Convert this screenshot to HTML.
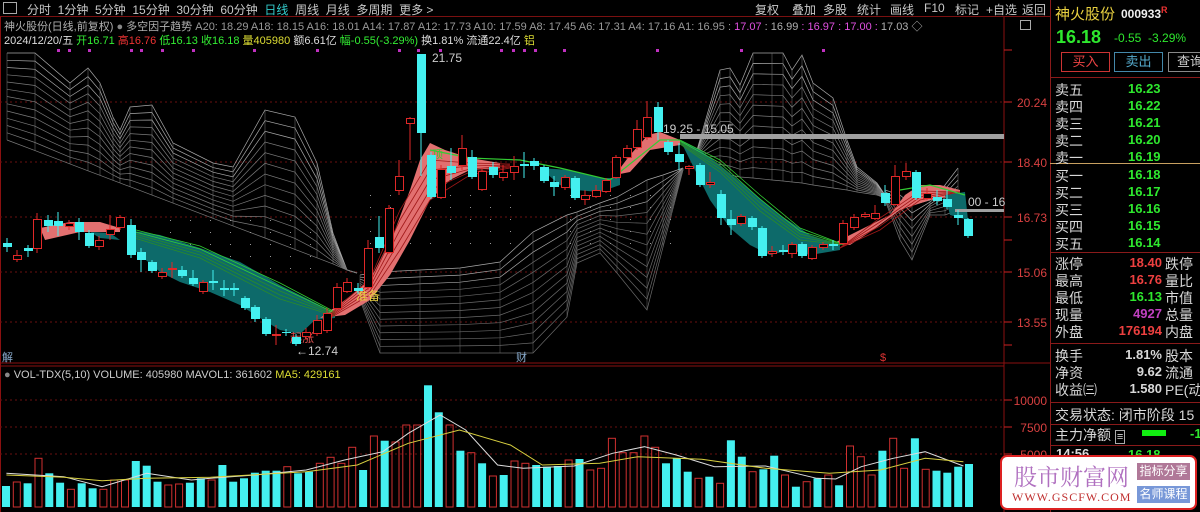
<!DOCTYPE html>
<html><head><meta charset="utf-8">
<style>
*{margin:0;padding:0;box-sizing:border-box}
body{width:1200px;height:512px;background:#000;overflow:hidden;position:relative;font-family:"Liberation Sans","Noto Sans CJK SC",sans-serif;color:#c8c8c8}
.a{position:absolute;white-space:nowrap}
#tb{position:absolute;left:0;top:0;width:1050px;height:17px;border-bottom:1px solid #7a1010;font-size:12px}
.rp{position:absolute;left:1050px;top:0;width:150px;height:512px;border-left:1px solid #8a1a1a}
.cn{font-size:14px;color:#d8d8d8}
.g{color:#2ee82e;font-weight:bold;font-size:13px}
.r{color:#ee4040;font-weight:bold;font-size:13px}
.w{color:#d8d8d8;font-weight:bold;font-size:13px}
.hl{position:absolute;left:1050px;width:150px;height:1px;background:#8a1a1a}
</style></head><body>
<svg id="s" class="a" style="left:0;top:0" width="1050" height="512" xmlns="http://www.w3.org/2000/svg"></svg>

<div id="tb">
 <div class="a" style="left:3px;top:2px;width:14px;height:12px;border:1px solid #aaa"></div>
 <div class="a" style="left:27px;top:1px;color:#c8c8c8">分时&nbsp;&nbsp;1分钟&nbsp;&nbsp;5分钟&nbsp;&nbsp;15分钟&nbsp;&nbsp;30分钟&nbsp;&nbsp;60分钟&nbsp;&nbsp;<span style="color:#3cc">日线</span>&nbsp;&nbsp;周线&nbsp;&nbsp;月线&nbsp;&nbsp;多周期&nbsp;&nbsp;更多 &gt;</div>
 <div class="a" style="left:755px;top:1px">复权</div>
 <div class="a" style="left:792px;top:1px">叠加</div>
 <div class="a" style="left:823px;top:1px">多股</div>
 <div class="a" style="left:857px;top:1px">统计</div>
 <div class="a" style="left:890px;top:1px">画线</div>
 <div class="a" style="left:924px;top:1px">F10</div>
 <div class="a" style="left:955px;top:1px">标记</div>
 <div class="a" style="left:986px;top:1px">+自选</div>
 <div class="a" style="left:1022px;top:1px">返回</div>
</div>
<div class="a" style="left:4px;top:18px;font-size:11px;color:#b0b0b0">神火股份(日线,前复权) <span style="color:#888">●</span> 多空因子趋势 <span style="color:#999">A20: 18.29 A18: 18.15 A16: 18.01 A14: 17.87 A12: 17.73 A10: 17.59 A8: 17.45 A6: 17.31 A4: 17.16 A1: 16.95 : </span><span style="color:#e050e0">17.07</span> : 16.99 <span style="color:#e050e0">: 16.97 : 17.00 :</span> 17.03 ◇</div>
<div class="a" style="left:1020px;top:20px;width:11px;height:10px;border:1px solid #aaa"></div>
<div class="a" style="left:4px;top:32px;font-size:11px;color:#ddd">2024/12/20/五 <span style="color:#3e3">开16.71</span> <span style="color:#e33">高16.76</span> <span style="color:#3e3">低16.13</span> <span style="color:#3e3">收16.18</span> <span style="color:#dd3">量405980</span> 额6.61亿 <span style="color:#3e3">幅-0.55(-3.29%)</span> 换1.81% 流通22.4亿 <span style="color:#dd3">铝</span></div>
<div class="a" style="left:4px;top:369px;font-size:11px;color:#ccc"><span style="color:#888">●</span> VOL-TDX(5,10) VOLUME: 405980 MAVOL1: 361602 <span style="color:#dd3">MA5: 429161</span></div>

<div class="rp">
 <div class="a" style="left:4px;top:3px;font-size:15px;color:#e8d040">神火股份</div>
 <div class="a" style="left:70px;top:5px;font-size:12px;color:#eee;font-weight:bold">000933<sup style="color:#e33;font-size:9px">R</sup></div>
 <div class="a" style="left:5px;top:27px;font-size:18px;color:#2ee82e;font-weight:bold">16.18</div>
 <div class="a" style="left:63px;top:31px;font-size:12px;color:#2ee82e">-0.55&nbsp;&nbsp;-3.29%</div>
 <div class="a" style="left:10px;top:52px;width:49px;height:20px;border:1px solid #c33;color:#e44;font-size:13px;text-align:center;line-height:18px">买入</div>
 <div class="a" style="left:63px;top:52px;width:49px;height:20px;border:1px solid #48a;color:#5ac;font-size:13px;text-align:center;line-height:18px">卖出</div>
 <div class="a" style="left:117px;top:52px;width:40px;height:20px;border:1px solid #888;color:#ccc;font-size:13px;line-height:18px;padding-left:8px">查询</div>
</div>
<div class="hl" style="top:77px"></div>
<div class="a" style="left:1050px;top:163px;width:150px;height:1px;background:#c8a060"></div>
<div class="hl" style="top:252px"></div>
<div class="hl" style="top:343px"></div>
<div class="hl" style="top:402px"></div>
<div class="hl" style="top:424px"></div>
<div class="hl" style="top:445px"></div>
<div id="rows"></div>
<div class="a" style="left:1056px;top:446px;font-size:13px;color:#ddd;font-weight:bold">14:56</div>
<div class="a" style="left:1128px;top:446px" ><span class="g">16.18</span></div>
<div class="a" style="left:1000px;top:455px;width:197px;height:55px;background:#fff;border:2px solid #d22;border-radius:7px">
 <div class="a" style="left:12px;top:2px;font-size:23px;color:#b070c0;font-family:'Noto Serif CJK SC',serif">股市财富网</div>
 <div class="a" style="left:10px;top:33px;font-size:12px;color:#c03030;font-family:'Liberation Serif',serif;letter-spacing:1px">WWW.GSCFW.COM</div>
 <div class="a" style="left:135px;top:6px;width:53px;height:17px;background:#b07898;color:#fff;font-size:12px;text-align:center;line-height:17px">指标分享</div>
 <div class="a" style="left:135px;top:29px;width:53px;height:17px;background:#7898d8;color:#fff;font-size:12px;text-align:center;line-height:17px">名师课程</div>
</div>

<script>
var S=document.getElementById('s'),h='';
function L(x1,y1,x2,y2,c,w,d){h+='<line x1="'+x1+'" y1="'+y1+'" x2="'+x2+'" y2="'+y2+'" stroke="'+c+'" stroke-width="'+(w||1)+'"'+(d?' stroke-dasharray="'+d+'"':'')+'/>';}
function P(pts,c,w,fill){h+='<polyline points="'+pts.map(function(p){return p.join(',')}).join(' ')+'" fill="'+(fill||'none')+'" stroke="'+c+'" stroke-width="'+(w||1)+'"/>';}
function G(pts,fill){h+='<polygon points="'+pts.map(function(p){return p.join(',')}).join(' ')+'" fill="'+fill+'"/>';}
function T(x,y,t,c,s,a){h+='<text x="'+x+'" y="'+y+'" fill="'+c+'" font-size="'+(s||11)+'" font-family="Liberation Sans,Noto Sans CJK SC,sans-serif"'+(a?' text-anchor="'+a+'"':'')+'>'+t+'</text>';}
L(0,17,0,512,'#8a1010',2);L(1004,17,1004,512,'#8a1010');L(0,363,1050,363,'#8a1010');L(0,366,1004,366,'#8a1010');
[102,162,217,272,322].forEach(function(y){L(0,y,1004,y,'#6a1010',1,'2,3');});
[400,427,454].forEach(function(y){L(0,y,1004,y,'#6a1010',1,'2,3');});
[[102,'20.24'],[162,'18.40'],[217,'16.73'],[272,'15.06'],[322,'13.55']].forEach(function(a){L(1004,a[0],1012,a[0],'#c22');T(1047,a[0]+5,a[1],'#d84040',12,'end');});
[[400,'10000'],[427,'7500'],[454,'5000']].forEach(function(a){L(1004,a[0],1012,a[0],'#c22');T(1047,a[0]+5,a[1],'#d84040',12,'end');});
L(1004,50,1012,50,'#c22');L(1004,240,1012,240,'#c22');L(1004,345,1012,345,'#c22');L(1004,480,1012,480,'#c22');
function mesh(xs,top,bot,n,c){
 for(var k=0;k<=n;k++){var pts=[];for(var i=0;i<xs.length;i++){var b=Math.max(bot[i],top[i]);pts.push([xs[i],(top[i]+(b-top[i])*k/n).toFixed(1)]);}P(pts,k<3?'#a8a8a8':c,0.7);}
 for(var i=0;i<xs.length;i++)L(xs[i],top[i],xs[i],Math.max(bot[i],top[i]),c,0.5);
}
var xs1=[7,35,70,88,100,113,120,130,152,173,213,233,265,295,317,333,347,357];
var t1=[53,53,83,68,83,117,130,107,105,143,163,167,110,117,163,233,270,273];
var b1=xs1.map(function(x){return 140+(x-7)*133/350});
mesh(xs1,t1,b1,12,'#7a7a7a');
mesh([360,380,420,460,500,533,567,577,600,617,647,663,683],[275,272,270,268,262,232,215,212,203,197,180,175,168],[300,353,353,353,353,353,317,263,253,273,310,247,170],12,'#6a6a6a');
mesh([697,720,730,740,753,772,783,792,802,813,833,847,857,877,885],[150,70,68,85,53,53,53,70,55,83,98,140,167,183,195],[160,173,175,177,178,180,181,182,183,185,188,190,192,195,198],12,'#7a7a7a');
mesh([885,900,912,930,945,958],[190,195,205,200,185,168],[200,240,260,215,215,210],7,'#777');
for(var x=10;x<1000;x+=20)for(var y=195;y<250;y+=12){if((x>560&&x<690)||(x>360&&x<520)){h+='<rect x="'+x+'" y="'+y+'" width="1" height="1" fill="#999"/>';}}
for(var x=170;x<330;x+=20)for(var y=220;y<270;y+=12)h+='<rect x="'+x+'" y="'+y+'" width="1" height="1" fill="#999"/>';
G([[128,230],[160,235],[200,248],[240,262],[280,285],[310,300],[335,313],[335,318],[315,320],[300,334],[280,330],[260,318],[240,305],[210,292],[180,282],[160,272],[140,255],[128,245]],'#0d6a6a');
G([[320,318],[345,300],[370,280],[395,230],[410,190],[420,160],[430,143],[445,150],[470,158],[500,163],[500,168],[470,170],[450,180],[430,200],[410,240],[390,275],[370,300],[345,315]],'#e27070');
G([[40,228],[70,222],[100,222],[120,228],[120,232],[80,232],[45,240]],'#e27070');
G([[90,232],[110,233],[120,240],[100,238]],'#0d6a6a');
G([[540,168],[570,170],[600,178],[620,178],[620,185],[600,192],[575,190],[560,185]],'#0d6a6a');
G([[615,175],[630,155],[648,135],[660,132],[680,140],[680,145],[650,150],[630,172]],'#e27070');
G([[680,140],[700,150],[720,165],[750,190],[780,215],[810,235],[840,245],[840,250],[810,255],[790,250],[770,255],[750,245],[730,228],[710,200],[695,170],[685,150]],'#0d6a6a');
G([[830,245],[850,235],[870,225],[890,215],[905,195],[920,185],[940,185],[960,190],[960,195],[930,200],[900,210],[870,232],[850,245]],'#e27070');
G([[945,195],[965,192],[968,220],[950,215]],'#0d6a6a');
for(var k=0;k<5;k++){P([[128,228+k*2],[200,246+k*3],[280,283+k*4],[335,312+k]],k<2?'#3c3':'#2a8a2a',0.8);}
for(var k=0;k<5;k++){P([[330,318-k],[370,295-k*4],[400,250-k*10],[430,200-k*10],[470,175-k*3],[510,168-k]],'#a01818',0.8);}
P([[430,150],[470,158],[520,160],[560,168],[610,180],[660,140],[680,140]],'#3c3',1.2);
for(var k=0;k<5;k++){P([[680,140+k],[720,160+k*3],[760,195+k*4],[800,228+k*3],[845,245]],k<2?'#3c3':'#2a8a2a',0.8);}
for(var k=0;k<4;k++){P([[840,248],[880,230-k*4],[920,200-k*3],[960,192]],'#a01818',0.8);}
P([[900,190],[930,185],[965,195]],'#3c3',1.2);
[57,68,88,130,140,161,192,253,316,398,417,439,500,512,523,534,563,656,740,822].forEach(function(x){h+='<rect x="'+x+'" y="49" width="3" height="3" fill="#c030c0"/>';});
h+='<rect x="680" y="134" width="324" height="5" fill="#a0a0a0"/>';
h+='<rect x="955" y="209" width="49" height="3" fill="#a0a0a0"/>';
T(663,133,'19.25 - 15.05','#ccc',12);T(968,206,'00 - 16','#ccc',12);
T(432,62,'21.75','#ccc',12);T(296,355,'←12.74','#ccc',12);
T(356,300,'准备','#e8d040',12);T(290,342,'起涨','#e05050',12);T(432,158,'顶','#3c3',11);
T(2,361,'解','#8ac',11);T(516,361,'财','#8ac',11);T(880,361,'$','#d33',11);
var C=[[7,243,247,238,252,'c'],[17,255,259,250,262,'r'],[28,248,251,245,257,'c'],[37,219,248,213,253,'r'],[48,220,226,215,232,'c'],[58,221,226,212,236,'c'],[69,223,226,220,230,'r'],[79,222,232,218,240,'c'],[89,233,246,230,248,'c'],[99,240,246,236,250,'r'],[110,229,234,215,240,'r'],[120,217,227,215,230,'r'],[131,225,255,219,258,'c'],[141,252,260,248,272,'c'],[152,262,271,260,273,'c'],[162,272,276,268,279,'r'],[172,268,269,262,278,'r'],[182,270,276,266,278,'c'],[193,278,284,270,286,'c'],[203,282,291,280,294,'r'],[213,281,283,270,290,'c'],[224,288,290,280,296,'c'],[234,288,290,283,296,'c'],[245,298,308,296,310,'c'],[255,307,319,305,322,'c'],[266,319,334,317,336,'c'],[276,334,335,325,345,'r'],[286,332,333,329,336,'c'],[296,337,344,334,346,'c'],[306,332,336,328,340,'r'],[317,320,333,315,336,'r'],[327,313,330,308,333,'r'],[337,287,308,283,310,'r'],[347,282,291,278,293,'r'],[358,288,291,283,294,'c'],[368,248,287,240,290,'r'],[379,237,248,216,253,'c'],[389,208,252,205,254,'r'],[399,176,190,160,195,'r'],[410,118,123,117,160,'r'],[421,54,133,54,176,'c'],[431,155,197,152,199,'c'],[441,169,197,165,199,'r'],[451,166,173,148,180,'c'],[462,148,165,135,170,'r'],[472,157,177,150,179,'c'],[482,171,189,168,191,'r'],[493,167,175,162,178,'c'],[503,172,177,165,181,'r'],[514,166,172,156,180,'r'],[524,164,166,152,178,'c'],[534,161,166,158,170,'c'],[544,167,181,165,183,'c'],[554,182,187,176,196,'c'],[565,177,187,175,190,'r'],[575,178,198,176,200,'c'],[585,195,199,190,205,'r'],[596,190,196,185,198,'r'],[606,180,191,178,193,'r'],[616,157,177,155,179,'r'],[627,148,157,145,159,'r'],[637,129,147,120,150,'r'],[647,117,137,101,140,'r'],[658,107,132,102,140,'c'],[668,142,152,140,155,'c'],[679,154,162,143,170,'c'],[689,166,168,165,175,'r'],[700,165,185,163,187,'c'],[710,182,184,172,188,'r'],[721,194,218,190,225,'c'],[731,219,225,210,235,'c'],[741,216,223,214,226,'r'],[752,218,227,216,230,'c'],[762,228,256,226,258,'c'],[772,251,253,246,257,'r'],[783,250,252,245,255,'c'],[792,244,253,242,258,'r'],[802,244,256,242,258,'c'],[812,247,258,245,260,'r'],[823,244,247,242,250,'r'],[833,244,246,240,250,'c'],[843,223,243,220,245,'r'],[854,217,227,214,230,'r'],[865,214,216,212,218,'r'],[875,213,218,205,220,'r'],[885,193,203,185,206,'c'],[895,176,204,165,206,'r'],[906,171,176,163,180,'r'],[916,172,198,170,200,'c'],[927,193,198,188,200,'r'],[937,197,201,190,205,'c'],[947,199,207,190,209,'c'],[958,215,218,210,225,'c'],[968,219,236,218,238,'c']];
C.forEach(function(c){var col=c[5]=='c'?'#44f0f0':'#e02828';L(c[0],c[3],c[0],c[4],col);
 if(c[5]=='c')h+='<rect x="'+(c[0]-4)+'" y="'+c[1]+'" width="9" height="'+Math.max(1,c[2]-c[1])+'" fill="#44f0f0"/>';
 else h+='<rect x="'+(c[0]-3.5)+'" y="'+(c[1]+0.5)+'" width="8" height="'+Math.max(1,c[2]-c[1])+'" fill="#000" stroke="#e02828"/>';});
var V=[[378,'c'],[366,'r'],[370,'c'],[295,'r'],[340,'c'],[368,'c'],[388,'r'],[370,'c'],[385,'c'],[388,'r'],[360,'r'],[360,'r'],[303,'c'],[317,'c'],[365,'c'],[375,'r'],[372,'r'],[368,'c'],[355,'c'],[360,'r'],[315,'c'],[365,'c'],[355,'c'],[338,'c'],[332,'c'],[332,'c'],[320,'r'],[340,'c'],[335,'c'],[310,'r'],[292,'r'],[310,'r'],[262,'r'],[330,'c'],[228,'r'],[242,'c'],[246,'r'],[195,'r'],[195,'r'],[76,'c'],[157,'c'],[195,'r'],[272,'c'],[278,'r'],[310,'c'],[348,'r'],[345,'c'],[303,'r'],[310,'r'],[315,'c'],[320,'c'],[318,'c'],[300,'r'],[297,'c'],[330,'r'],[325,'r'],[235,'r'],[278,'r'],[278,'r'],[228,'r'],[262,'r'],[310,'c'],[295,'c'],[335,'c'],[355,'r'],[350,'c'],[370,'r'],[241,'c'],[290,'c'],[335,'r'],[328,'c'],[287,'c'],[345,'r'],[380,'c'],[365,'r'],[355,'c'],[345,'r'],[376,'c'],[258,'r'],[290,'r'],[345,'r'],[272,'c'],[235,'r'],[325,'r'],[235,'c'],[328,'r'],[332,'c'],[338,'c'],[320,'c'],[312,'c']];
V.forEach(function(v,i){var x=2+i*10.82,y=v[0]/3+360,hh=507-y;
 if(v[1]=='c')h+='<rect x="'+x.toFixed(1)+'" y="'+y.toFixed(1)+'" width="8" height="'+hh.toFixed(1)+'" fill="#44f0f0"/>';
 else h+='<rect x="'+(x+0.5).toFixed(1)+'" y="'+y.toFixed(1)+'" width="7" height="'+hh.toFixed(1)+'" fill="none" stroke="#d03030"/>';});
function cv(a){return a.map(function(p){return [(p[0]*0.638).toFixed(1),(p[1]/3+360).toFixed(1)]});}
P(cv([[10,340],[100,350],[160,380],[230,340],[300,360],[330,355],[400,345],[480,330],[540,300],[600,275],[640,220],[690,165],[730,210],[780,315],[820,325],[900,318],[960,280],[1010,260],[1060,285],[1120,320],[1200,318],[1280,355],[1310,357],[1350,320],[1400,295],[1450,275],[1510,318]]),'#ddd',1);
P(cv([[10,345],[100,352],[160,362],[230,355],[330,352],[480,335],[560,315],[640,250],[720,210],[800,255],[850,315],[940,310],[1000,290],[1100,298],[1200,325],[1300,340],[1380,330],[1450,295],[1510,305]]),'#d8d040',1);
S.innerHTML=h;
var R=[['卖五','16.23',80],['卖四','16.22',97],['卖三','16.21',114],['卖二','16.20',131],['卖一','16.19',148],['买一','16.18',166],['买二','16.17',183],['买三','16.16',200],['买四','16.15',217],['买五','16.14',234]];
var o='';R.forEach(function(r){o+='<div class="a cn" style="left:1055px;top:'+r[2]+'px">'+r[0]+'</div><div class="a g" style="left:1128px;top:'+(r[2]+1)+'px">'+r[1]+'</div>';});
var R2=[['涨停','18.40','r','跌停',254],['最高','16.76','r','量比',271],['最低','16.13','g','市值',288],['现量','4927','m','总量',305],['外盘','176194','r','内盘',322],['换手','1.81%','w','股本',346],['净资','9.62','w','流通',363],['收益㈢','1.580','w','PE(动',380]];
R2.forEach(function(r){var cl=r[2]=='m'?'w" style="color:#c040c0;':r[2]+'" style="';
 o+='<div class="a cn" style="left:1055px;top:'+r[4]+'px">'+r[0]+'</div><div class="a '+cl+'right:38px;top:'+(r[4]+1)+'px">'+r[1]+'</div><div class="a cn" style="left:1165px;top:'+r[4]+'px">'+r[3]+'</div>';});
o+='<div class="a cn" style="left:1055px;top:405px">交易状态: 闭市阶段 15</div>';
o+='<div class="a cn" style="left:1055px;top:425px">主力净额 <span style="font-size:11px;border:1px solid #aaa;padding:0 1px">≡</span></div><div class="a" style="left:1142px;top:430px;width:24px;height:6px;background:#1e1"></div><div class="a g" style="left:1190px;top:426px">-1</div>';
document.getElementById('rows').innerHTML=o;
</script>
</body></html>
